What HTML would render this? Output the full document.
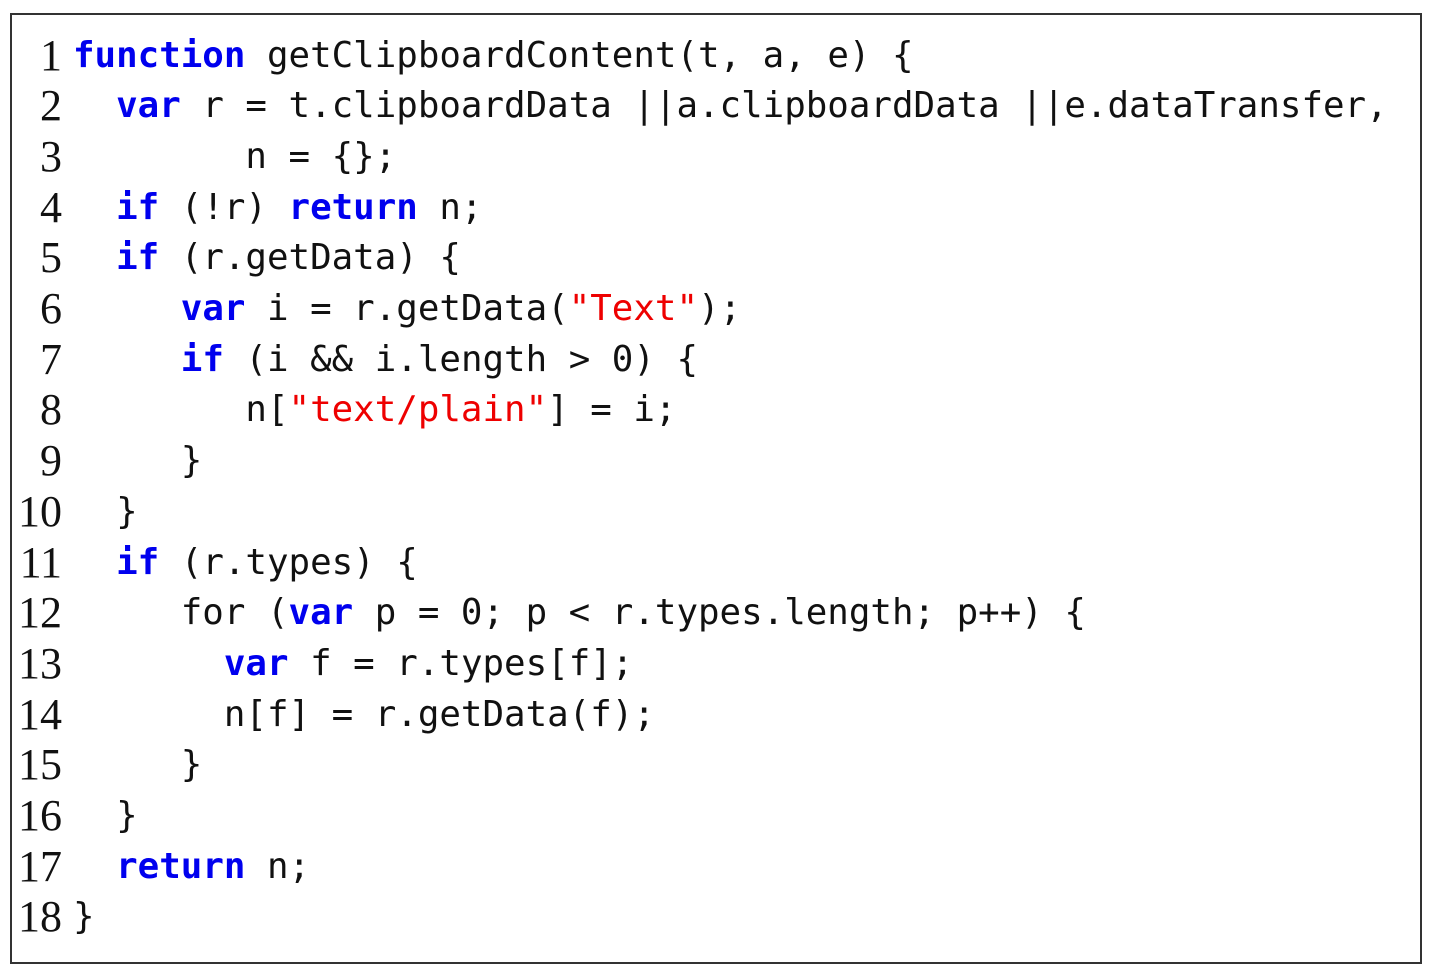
<!DOCTYPE html>
<html><head><meta charset="utf-8"><style>
html,body{margin:0;padding:0;background:#fff;width:1430px;height:974px;overflow:hidden}
.box{position:absolute;left:10px;top:13px;width:1412px;height:951px;border:2px solid #333;box-sizing:border-box}
.l{position:absolute;left:0;height:50.7px;line-height:50.7px;white-space:pre;font-family:"DejaVu Sans Mono","Liberation Mono",monospace;font-size:35.8px;color:#111}
.n{display:inline-block;width:62px;text-align:right;font-family:"Liberation Serif",serif;font-size:44px;color:#111}
.c{position:absolute;left:73px;top:0}
b{color:#0000ee;font-weight:bold}
s{color:#ee0000;text-decoration:none}
</style></head><body>
<div class="box"></div>
<div class="l" style="top:30.5px"><span class="n">1</span><span class="c"><b>function</b> getClipboardContent(t, a, e) {</span></div>
<div class="l" style="top:81.2px"><span class="n">2</span><span class="c">  <b>var</b> r = t.clipboardData ||a.clipboardData ||e.dataTransfer,</span></div>
<div class="l" style="top:131.9px"><span class="n">3</span><span class="c">        n = {};</span></div>
<div class="l" style="top:182.6px"><span class="n">4</span><span class="c">  <b>if</b> (!r) <b>return</b> n;</span></div>
<div class="l" style="top:233.3px"><span class="n">5</span><span class="c">  <b>if</b> (r.getData) {</span></div>
<div class="l" style="top:284px"><span class="n">6</span><span class="c">     <b>var</b> i = r.getData(<s>"Text"</s>);</span></div>
<div class="l" style="top:334.7px"><span class="n">7</span><span class="c">     <b>if</b> (i &amp;&amp; i.length &gt; 0) {</span></div>
<div class="l" style="top:385.4px"><span class="n">8</span><span class="c">        n[<s>"text/plain"</s>] = i;</span></div>
<div class="l" style="top:436.1px"><span class="n">9</span><span class="c">     }</span></div>
<div class="l" style="top:486.8px"><span class="n">10</span><span class="c">  }</span></div>
<div class="l" style="top:537.5px"><span class="n">11</span><span class="c">  <b>if</b> (r.types) {</span></div>
<div class="l" style="top:588.2px"><span class="n">12</span><span class="c">     for (<b>var</b> p = 0; p &lt; r.types.length; p++) {</span></div>
<div class="l" style="top:638.9px"><span class="n">13</span><span class="c">       <b>var</b> f = r.types[f];</span></div>
<div class="l" style="top:689.6px"><span class="n">14</span><span class="c">       n[f] = r.getData(f);</span></div>
<div class="l" style="top:740.3px"><span class="n">15</span><span class="c">     }</span></div>
<div class="l" style="top:791px"><span class="n">16</span><span class="c">  }</span></div>
<div class="l" style="top:841.7px"><span class="n">17</span><span class="c">  <b>return</b> n;</span></div>
<div class="l" style="top:892.4px"><span class="n">18</span><span class="c">}</span></div>
</body></html>
